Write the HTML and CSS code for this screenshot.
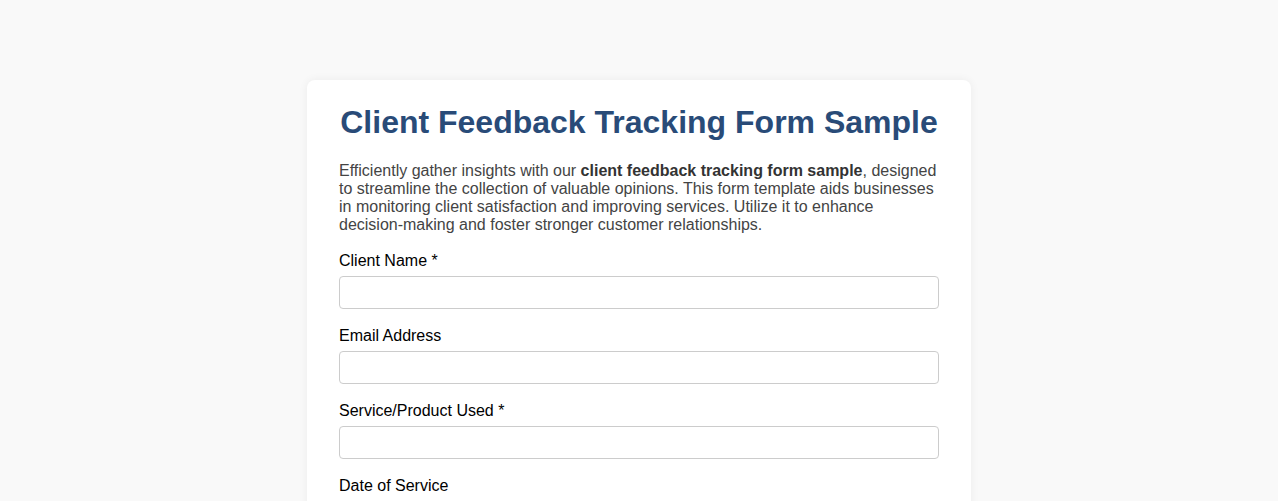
FILE: index.html
```
<!DOCTYPE html>
<html lang="en">
<head>
<meta charset="utf-8">
<title>Client Feedback Tracking Form Sample</title>
<link rel="stylesheet" href="styles.css">
</head>
<body>
<main class="card">
  <h1 class="title">Client Feedback Tracking Form Sample</h1>
  <p class="intro">Efficiently gather insights with our <strong>client feedback tracking form sample</strong>, designed to streamline the collection of valuable opinions. This form template aids businesses in monitoring client satisfaction and improving services. Utilize it to enhance decision-making and foster stronger customer relationships.</p>
  <form class="form">
    <div class="field">
      <label class="label" for="name">Client Name *</label>
      <input class="input" id="name" type="text">
    </div>
    <div class="field">
      <label class="label" for="email">Email Address</label>
      <input class="input" id="email" type="email">
    </div>
    <div class="field">
      <label class="label" for="service">Service/Product Used *</label>
      <input class="input" id="service" type="text">
    </div>
    <div class="field">
      <label class="label" for="date">Date of Service</label>
      <input class="input" id="date" type="text">
    </div>
  </form>
</main>
</body>
</html>
```
FILE: styles.css
```
html, body {
  margin: 0;
  padding: 0;
}
body {
  background: #f9f9f9;
  font-family: "Liberation Sans", Arial, sans-serif;
  color: #000;
  padding-top: 80px;
}
.card {
  box-sizing: border-box;
  width: 664px;
  margin: 0 auto;
  background: #fff;
  border-radius: 8px;
  box-shadow: 0 0 10px rgba(0, 0, 0, 0.06);
  padding: 24px 32px 32px;
}
.title {
  margin: 0 0 21px;
  font-size: 32px;
  font-weight: bold;
  text-align: center;
  color: #294b78;
  line-height: 37px;
}
.intro {
  margin: 0 0 18px;
  font-size: 16px;
  line-height: 18px;
  color: #444;
}
.intro strong {
  color: #333;
}
.form {
  margin: 0;
}
.field {
  margin-bottom: 18px;
}
.label {
  display: block;
  font-size: 16px;
  line-height: 18px;
  margin-bottom: 6px;
  color: #000;
}
.input {
  display: block;
  box-sizing: border-box;
  width: 100%;
  height: 33px;
  border: 1px solid #ccc;
  border-radius: 4px;
  padding: 8px;
  font-size: 16px;
  font-family: inherit;
  background: #fff;
}
```
